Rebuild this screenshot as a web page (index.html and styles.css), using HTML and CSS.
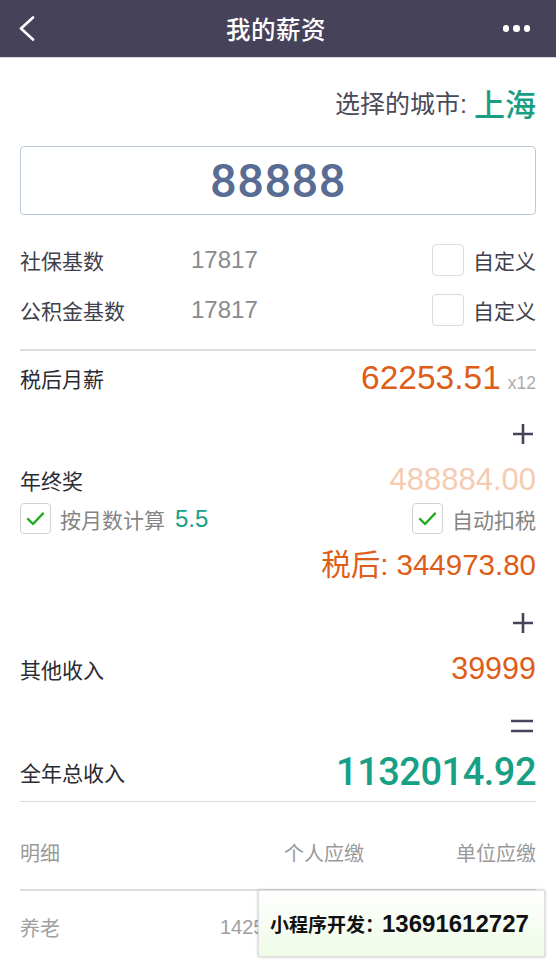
FILE: index.html
```html
<!DOCTYPE html>
<html lang="zh-CN">
<head>
<meta charset="utf-8">
<title>我的薪资</title>
<link rel="stylesheet" href="styles.css">
</head>
<body>
<div class="page">
  <header class="nav">
    <svg class="back" width="16" height="26" viewBox="0 0 16 26"><polyline points="14,1.5 2,12.5 14,23.5" fill="none" stroke="#fff" stroke-width="2.6" stroke-linecap="round" stroke-linejoin="round"/></svg>
    <div class="title">我的薪资</div>
    <div class="dots"><i></i><i></i><i></i></div>
  </header>

  <main class="content">
    <div class="city">选择的城市: <span class="city-name">上海</span></div>

    <div class="salary-input">88888</div>

    <div class="base-list">
      <div class="base-row">
        <span class="base-label">社保基数</span>
        <span class="base-val">17817</span>
        <span class="custom"><span class="box"></span>自定义</span>
      </div>
      <div class="base-row">
        <span class="base-label">公积金基数</span>
        <span class="base-val">17817</span>
        <span class="custom"><span class="box"></span>自定义</span>
      </div>
    </div>

    <div class="divider div-top"></div>

    <div class="row row-monthly">
      <span class="label">税后月薪</span>
      <span class="amount"><span class="num orange monthly">62253.51</span><span class="times">x12</span></span>
    </div>

    <div class="op op-1"><svg width="22" height="22" viewBox="0 0 22 22"><path d="M11 1v20M1 11h20" stroke="#46425a" stroke-width="2.6"/></svg></div>

    <div class="row row-bonus">
      <span class="label">年终奖</span>
      <span class="num peach bonus">488884.00</span>
    </div>

    <div class="checks">
      <span class="check-item">
        <span class="box checked"><svg width="31" height="31" viewBox="0 0 31 31"><polyline points="8,16 13,21 23,10.5" fill="none" stroke="#1aad19" stroke-width="2.4" stroke-linecap="round" stroke-linejoin="round"/></svg></span>
        <span class="check-text">按月数计算</span><span class="months">5.5</span>
      </span>
      <span class="check-item">
        <span class="box checked"><svg width="31" height="31" viewBox="0 0 31 31"><polyline points="8,16 13,21 23,10.5" fill="none" stroke="#1aad19" stroke-width="2.4" stroke-linecap="round" stroke-linejoin="round"/></svg></span>
        <span class="check-text">自动扣税</span>
      </span>
    </div>

    <div class="row row-after">
      <span></span>
      <span class="after orange">税后: <span class="num">344973.80</span></span>
    </div>

    <div class="op op-2"><svg width="22" height="22" viewBox="0 0 22 22"><path d="M11 1v20M1 11h20" stroke="#46425a" stroke-width="2.6"/></svg></div>

    <div class="row row-other">
      <span class="label">其他收入</span>
      <span class="num orange other">39999</span>
    </div>

    <div class="op op-3"><svg width="24" height="14" viewBox="0 0 24 14"><path d="M1 2h22M1 12h22" stroke="#46425a" stroke-width="2.6"/></svg></div>

    <div class="row row-total">
      <span class="label">全年总收入</span>
      <span class="num green total">1132014.92</span>
    </div>

    <div class="divider div-mid"></div>

    <div class="detail-head">
      <span class="c1">明细</span>
      <span class="c2">个人应缴</span>
      <span class="c3">单位应缴</span>
    </div>

    <div class="divider div-low"></div>

    <div class="detail-row">
      <span class="c1">养老</span>
      <span class="c2 num">1425</span>
    </div>
  </main>

  <div class="promo"><span class="promo-label">小程序开发：</span><span class="promo-num">13691612727</span></div>
</div>
</body>
</html>
```

FILE: styles.css
```css
* { box-sizing: border-box; }

html, body {
  margin: 0;
  padding: 0;
  background: #ffffff;
}

body {
  font-family: "Liberation Sans", "Noto Sans CJK SC", sans-serif;
  color: #3a3a48;
  width: 556px;
  height: 960px;
  overflow: hidden;
}

.page {
  position: relative;
  width: 556px;
  height: 960px;
  overflow: hidden;
}

/* ---------- nav bar ---------- */
.nav {
  display: grid;
  grid-template-columns: 1fr auto 1fr;
  align-items: center;
  height: 58px;
  padding: 0 26px 0 19px;
  background: #46425a;
  border-bottom: 1px solid #d9d9de;
}

.back { display: block; margin-top: 1px; }

.title {
  font-family: "Noto Sans CJK SC", sans-serif;
  font-size: 24.5px;
  font-weight: 500;
  color: #ffffff;
  letter-spacing: 0.5px;
  margin-left: 3px;
}

.dots {
  justify-self: end;
  display: flex;
  gap: 4px;
}

.dots i {
  display: block;
  width: 6.5px;
  height: 6.5px;
  border-radius: 50%;
  background: #ffffff;
}

/* ---------- content ---------- */
.content {
  padding: 0 20px;
}

.city {
  display: flex;
  justify-content: flex-end;
  align-items: center;
  height: 86px;
  font-size: 25px;
  color: #4a4a5a;
  padding-top: 2px;
}

.city-name {
  font-family: "Noto Sans CJK SC", sans-serif;
  font-size: 31px;
  font-weight: 500;
  color: #1a9e82;
  margin-left: 7px;
}

.salary-input {
  display: flex;
  justify-content: center;
  align-items: center;
  height: 69px;
  margin-top: 2px;
  border: 1.5px solid #bcc8dc;
  border-radius: 4px;
  font-family: "Roboto", sans-serif;
  font-weight: 500;
  font-size: 47px;
  color: #586c94;
  letter-spacing: 0.5px;
}

.base-list { margin-top: 20px; }

.base-row {
  display: flex;
  align-items: center;
  height: 50px;
  font-size: 21px;
}

.base-label {
  width: 171px;
  color: #3f3f4d;
}

.base-val {
  flex: 1;
  font-size: 24px;
  color: #8a8a8a;
}

.custom {
  display: flex;
  align-items: center;
  gap: 9px;
  color: #3f3f4d;
}

.box {
  display: block;
  width: 32px;
  height: 32px;
  border: 1.5px solid #dadada;
  border-radius: 4px;
  background: #fff;
}

.box.checked {
  width: 31px;
  height: 31px;
  border-color: #d2d2d2;
}

.box svg { display: block; margin: -1.5px 0 0 -1.5px; }

.divider {
  height: 1.5px;
  background: #dddddd;
}

.div-top { margin-top: 14px; }

/* ---------- summary rows ---------- */
.row {
  display: flex;
  justify-content: space-between;
  align-items: center;
  height: 40px;
}

.label {
  font-size: 21px;
  color: #2b2b33;
}

.num { font-family: "Liberation Sans", sans-serif; }

.orange { color: #de5d18; }
.peach { color: #f5cbb1; }
.green { color: #17a085; }

.amount {
  display: flex;
  align-items: baseline;
}

.monthly { font-size: 33.5px; }

.times {
  font-size: 17.5px;
  color: #ababab;
  margin-left: 7px;
}

.row-monthly { margin-top: 7px; }

.op {
  display: flex;
  justify-content: flex-end;
  align-items: center;
  height: 30px;
  padding-right: 2px;
}

.op svg { display: block; }

.op-1 { margin-top: 21px; }
.row-bonus { margin-top: 11px; }
.bonus { font-size: 31px; }

.checks {
  display: flex;
  justify-content: space-between;
  align-items: center;
  height: 32px;
  margin-top: 3px;
}

.check-item {
  display: flex;
  align-items: center;
}

.check-text {
  font-size: 21px;
  color: #858585;
  margin-left: 9px;
}

.months {
  font-size: 24px;
  color: #17a085;
  margin-left: 10px;
}

.row-after { margin-top: 7px; }

.after {
  font-size: 29.5px;
}

.op-2 { margin-top: 26px; }
.row-other { margin-top: 11px; }
.other { font-size: 30.5px; }

.op-3 { margin-top: 22px; }
.row-total { margin-top: 9px; height: 44px; }
.total { font-family: "Roboto", sans-serif; font-weight: 500; font-size: 38px; letter-spacing: -0.5px; }

.div-mid { margin-top: 7px; }

/* ---------- detail table ---------- */
.detail-head,
.detail-row {
  display: grid;
  grid-template-columns: 200px 1fr 172px;
  align-items: center;
  height: 40px;
  font-size: 20px;
  color: #9a9a9a;
}

.detail-head { margin-top: 30px; }
.detail-head .c2 { text-align: right; }
.detail-head .c3 { text-align: right; }

.div-low { margin-top: 17px; }

.detail-row { margin-top: 17px; color: #a0a0a0; }

/* ---------- overlay promo ---------- */
.promo {
  position: absolute;
  left: 258px;
  top: 890px;
  width: 287px;
  height: 67px;
  display: flex;
  align-items: center;
  padding-left: 11px;
  background: linear-gradient(#ffffff, #eefbe6);
  border: 1px solid #dedede;
  box-shadow: 0 0 3px rgba(0, 0, 0, 0.25);
  color: #111111;
  font-weight: 700;
}

.promo-label {
  font-family: "Noto Sans CJK SC", sans-serif;
  font-size: 19px;
  font-weight: 700;
}

.promo-num {
  font-family: "Liberation Sans", sans-serif;
  font-size: 24px;
  font-weight: 700;
  margin-left: -2px;
}
```
